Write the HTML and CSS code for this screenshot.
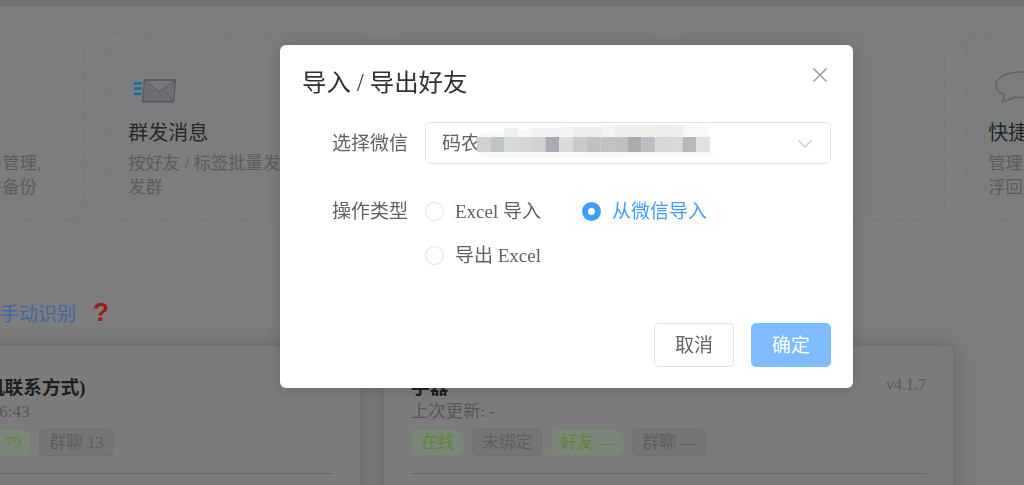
FILE: index.html
```html
<!DOCTYPE html>
<html lang="zh-CN">
<head>
    <meta charset="UTF-8">
    <meta name="viewport" content="width=device-width, initial-scale=1.0">
    <title>导入 / 导出好友</title>
    <link rel="stylesheet" href="styles.css">
</head>
<body>
    <div class="page">
        <div class="top-strip"></div>

        <div class="feature-row">
            <div class="feature-card">
                <div class="feature-icon"></div>
                <div class="feature-title">好友管理</div>
                <div class="feature-desc">好友批量导入/导出与管理,<br>支持Excel文件导入并备份</div>
            </div>
            <div class="feature-card">
                <div class="feature-icon">
                    <svg width="44" height="24" viewBox="0 0 44 24">
                        <path d="M1 4.500H9M1.500 9.500H8.500M1 15H8" stroke="#14a0e0" stroke-width="2.600" fill="none"/>
                        <path d="M11.500 .8H42.500L40.500 22.800H9.500Z" fill="#a39da8" stroke="#857f8c" stroke-width="1.400" stroke-linejoin="round"/>
                        <path d="M12 1.500L26 12.500L42 1.500Z" fill="#b0abb8" stroke="#857f8c" stroke-width="1"/>
                        <path d="M10 22L22 11M40.500 22L30 10" stroke="#8d8894" stroke-width=".8" fill="none"/>
                    </svg>
                </div>
                <div class="feature-title">群发消息</div>
                <div class="feature-desc">按好友 / 标签批量发<br>发群</div>
            </div>
            <div class="feature-card"></div>
            <div class="feature-card"></div>
            <div class="feature-card">
                <div class="feature-icon">
                    <svg class="bubble" width="48" height="32" viewBox="0 0 48 32">
                        <path d="M26 1C12 1 1 6.500 1 14C1 18 4 21.500 9 23.500C9 26 8.500 28.500 7.500 30.500C12 30 16 28 20 26C22 26.300 24 26.500 26 26.500C40 26.500 47 20.500 47 14C47 6.500 40 1 26 1Z" fill="none" stroke="#8e8e8e" stroke-width="1.500"/>
                    </svg>
                </div>
                <div class="feature-title">快捷回复</div>
                <div class="feature-desc">管理常用话术内容<br>浮回复</div>
            </div>
        </div>

        <div class="link-row">
            <a class="link-text">点击手动识别</a>
            <span class="help-mark">?</span>
        </div>

        <div class="bot-row">
            <div class="bot-card">
                <div class="bot-head">
                    <div class="bot-title">微信助手（未绑定手机联系方式)</div>
                </div>
                <div class="bot-sub">上次更新:&nbsp; 2025-10-22&nbsp; 16:43</div>
                <div class="tags">
                    <span class="tag tag-green">在线</span>
                    <span class="tag">已绑定</span>
                    <span class="tag tag-green">好友 79</span>
                    <span class="tag">群聊 13</span>
                </div>
                <div class="divider"></div>
            </div>
            <div class="bot-card">
                <div class="bot-head">
                    <div class="bot-title">手器</div>
                    <div class="bot-version">v4.1.7</div>
                </div>
                <div class="bot-sub">上次更新: -</div>
                <div class="tags">
                    <span class="tag tag-green">在线</span>
                    <span class="tag">未绑定</span>
                    <span class="tag tag-green">好友 —</span>
                    <span class="tag">群聊 —</span>
                </div>
                <div class="divider"></div>
            </div>
        </div>
    </div>

    <div class="overlay">
        <div class="dialog">
            <div class="dialog-title">导入 / 导出好友</div>
            <svg class="dialog-close" width="14" height="14" viewBox="0 0 14 14">
                <path d="M.5 .5L13.500 13.500M13.500 .5L.5 13.500" stroke="#909399" stroke-width="1.300" fill="none"/>
            </svg>

            <div class="form-row first">
                <label class="form-label">选择微信</label>
                <div class="select-box">
                    <span class="select-value">码农</span>
                    <!-- mosaic over the account name -->
                    <svg class="mosaic" width="250" height="42" viewBox="0 0 250 42">
                        <path d="M7 12C40 8 90 6 140 4C180 2 215 1 238 6L241 30C248 35 240 36 225 33C170 35 80 36 20 36C12 34 8 32 7 30Z" fill="#f8f8f8"/>
                        <rect x="34" y="6" width="14" height="9" fill="#f0f0f0"/>
                        <rect x="62" y="6" width="28" height="9" fill="#f2f2f2"/>
                        <rect x="90" y="5" width="13" height="10" fill="#f5f5f5"/>
                        <rect x="103" y="5" width="29" height="10" fill="#ededed"/>
                        <rect x="132" y="3" width="13" height="12" fill="#f5f5f3"/>
                        <rect x="145" y="3" width="68" height="12" fill="#eeeeed"/>
                        <rect x="7" y="15" width="13.800" height="15" fill="#cfd1d2"/>
                        <rect x="20.700" y="15" width="13.800" height="15" fill="#bdc4c6"/>
                        <rect x="34.400" y="15" width="13.800" height="15" fill="#d8d9d9"/>
                        <rect x="48.100" y="15" width="13.800" height="15" fill="#d4d5d6"/>
                        <rect x="61.800" y="15" width="13.800" height="15" fill="#cfd1d2"/>
                        <rect x="75.500" y="15" width="13.800" height="15" fill="#a9acb0"/>
                        <rect x="89.200" y="15" width="13.800" height="15" fill="#d8dcde"/>
                        <rect x="102.900" y="15" width="13.800" height="15" fill="#c8cacc"/>
                        <rect x="116.600" y="15" width="13.800" height="15" fill="#c5c0c0"/>
                        <rect x="130.300" y="15" width="13.800" height="15" fill="#c0c2c3"/>
                        <rect x="144" y="15" width="13.800" height="15" fill="#c0c0c2"/>
                        <rect x="157.700" y="15" width="13.800" height="15" fill="#a9abad"/>
                        <rect x="171.400" y="15" width="13.800" height="15" fill="#bcbfc2"/>
                        <rect x="185.100" y="15" width="13.800" height="15" fill="#d6d8d9"/>
                        <rect x="198.800" y="15" width="13.800" height="15" fill="#d9d9d9"/>
                        <rect x="212.500" y="15" width="13.800" height="15" fill="#b7b8ba"/>
                        <rect x="226.200" y="15" width="13.800" height="15" fill="#dfe1e2"/>
                    </svg>
                    <svg class="select-arrow" width="14" height="8" viewBox="0 0 14 8">
                        <path d="M.5 .5L7 7L13.500 .5" stroke="#c0c4cc" stroke-width="1.200" fill="none"/>
                    </svg>
                </div>
            </div>

            <div class="form-row">
                <label class="form-label radio-label">操作类型</label>
                <div class="radio-group">
                    <div class="radio-item"><span class="radio-dot"></span><span class="radio-text">Excel 导入</span></div>
                    <div class="radio-item checked"><span class="radio-dot"></span><span class="radio-text">从微信导入</span></div>
                    <div class="radio-item"><span class="radio-dot"></span><span class="radio-text">导出 Excel</span></div>
                </div>
            </div>

            <div class="dialog-footer">
                <button class="btn">取消</button>
                <button class="btn btn-primary">确定</button>
            </div>
        </div>
    </div>
</body>
</html>
```

FILE: styles.css
```css
* {
    box-sizing: border-box;
}

html, body {
    margin: 0;
    height: 100%;
    overflow: hidden;
}

body {
    font-family: "Liberation Serif", "Noto Sans CJK SC", serif;
    background-color: #b4b4b4;
    color: #424242;
}

.page {
    height: 485px;
    overflow: hidden;
}

.top-strip {
    height: 6px;
    background-color: #a2a2a2;
}

/* Feature cards along the top */
.feature-row {
    display: flex;
    gap: 21.33px;
    margin: 27px 0 0 -180.5px;
}

.feature-card {
    flex: none;
    width: 265.33px;
    height: 187px;
    padding: 33px 21px 0;
    background-color: #b2b3b5;
    border: 1px dashed #a4a5a7;
    border-radius: 13px;
}

.feature-icon {
    display: flex;
    align-items: flex-end;
    height: 36px;
    padding-left: 5px;
}

.feature-icon .bubble {
    margin-left: 2px;
}

.feature-title {
    margin-top: 18px;
    font-size: 20px;
    line-height: 24px;
    color: #3a3a3a;
}

.feature-desc {
    margin-top: 7px;
    font-size: 17.33px;
    line-height: 23.5px;
    color: #858585;
    white-space: nowrap;
}

/* Link line */
.link-row {
    display: flex;
    align-items: center;
    height: 40px;
    margin: 72px 0 0 -38px;
    font-size: 19px;
}

.link-text {
    color: #5598e6;
}

.help-mark {
    margin-left: 17px;
    font-family: "Liberation Sans", sans-serif;
    font-size: 26px;
    font-weight: bold;
    line-height: 26px;
    color: #e52222;
}

/* Bot cards */
.bot-row {
    display: flex;
    gap: 24px;
    margin: 14px 0 0 -209px;
}

.bot-card {
    flex: none;
    width: 569px;
    height: 200px;
    padding: 27px;
    background-color: #b2b2b2;
    border-radius: 6px;
    box-shadow: 0 0 20px rgba(0, 0, 0, 0.22);
}

.bot-head {
    display: flex;
    justify-content: space-between;
    height: 30px;
}

.bot-title {
    font-size: 18.67px;
    line-height: 30px;
    font-weight: bold;
    color: #2c2c2c;
}

.bot-version {
    font-size: 16px;
    line-height: 24px;
    color: #848484;
}

.bot-sub {
    padding-top: 1px;
    height: 16px;
    font-size: 17.33px;
    line-height: 16px;
    color: #7e7e7e;
}

.tags {
    display: flex;
    gap: 8px;
    margin-top: 10px;
}

.tag {
    height: 27px;
    padding: 0 9px;
    font-size: 16.67px;
    line-height: 25px;
    color: #868686;
    background-color: #a8a8a8;
    border: 1px solid #a2a2a2;
    border-radius: 5px;
}

.tag-green {
    color: #7ec44e;
    background-color: #b0bfac;
    border-color: #a6baa0;
}

.divider {
    height: 1px;
    margin-top: 17px;
    background-color: #949494;
}

/* Dialog */
.overlay {
    position: fixed;
    top: 0;
    left: 0;
    right: 0;
    bottom: 0;
    display: flex;
    align-items: flex-start;
    padding: 45px 0 0 280px;
    background-color: rgba(0, 0, 0, 0.3);
}

.dialog {
    position: relative;
    width: 573px;
    padding: 22px 22px 21px;
    background-color: #fff;
    border-radius: 6px;
    box-shadow: 0 1px 16px rgba(0, 0, 0, 0.18);
}

.dialog-title {
    font-size: 24.4px;
    line-height: 32px;
    color: #303133;
}

.dialog-close {
    position: absolute;
    top: 23px;
    right: 26px;
}

.form-row {
    display: flex;
    gap: 17px;
    margin-top: 25px;
}

.form-row.first {
    height: 42px;
    margin-top: 23px;
}

.form-label {
    flex: none;
    width: 106px;
    font-size: 19px;
    line-height: 44px;
    text-align: right;
    color: #606266;
}

.radio-label {
    padding-top: 1px;
}

.select-box {
    position: relative;
    display: flex;
    align-items: center;
    width: 406px;
    height: 42px;
    padding: 0 16px;
    border: 1px solid #dcdfe6;
    border-radius: 5px;
}

.select-value {
    padding-top: 2px;
    font-size: 19px;
    line-height: 20px;
    color: #606266;
}

.mosaic {
    position: absolute;
    top: -1px;
    left: 44px;
}

.select-arrow {
    position: absolute;
    top: 17px;
    right: 18px;
}

.radio-group {
    display: flex;
    flex-wrap: wrap;
    width: 406px;
}

.radio-item {
    display: flex;
    align-items: center;
    gap: 11px;
    height: 44px;
    margin-right: 41px;
    font-size: 19px;
    color: #606266;
}

.radio-text {
    padding-top: 2px;
    line-height: 20px;
}

.radio-dot {
    width: 19px;
    height: 19px;
    background-color: #fff;
    border: 1px solid #dcdfe6;
    border-radius: 50%;
}

.radio-item.checked {
    color: #409eff;
}

.radio-item.checked .radio-dot {
    border: 6px solid #409eff;
}

.dialog-footer {
    display: flex;
    justify-content: flex-end;
    gap: 17px;
    margin-top: 46px;
}

.btn {
    width: 80px;
    height: 44px;
    padding: 1px 0 0;
    font-family: inherit;
    font-size: 19px;
    line-height: 20px;
    color: #606266;
    background-color: #fff;
    border: 1px solid #dcdfe6;
    border-radius: 5px;
}

.btn-primary {
    color: #fff;
    background-color: #7fbcff;
    border-color: #7fbcff;
}
```
